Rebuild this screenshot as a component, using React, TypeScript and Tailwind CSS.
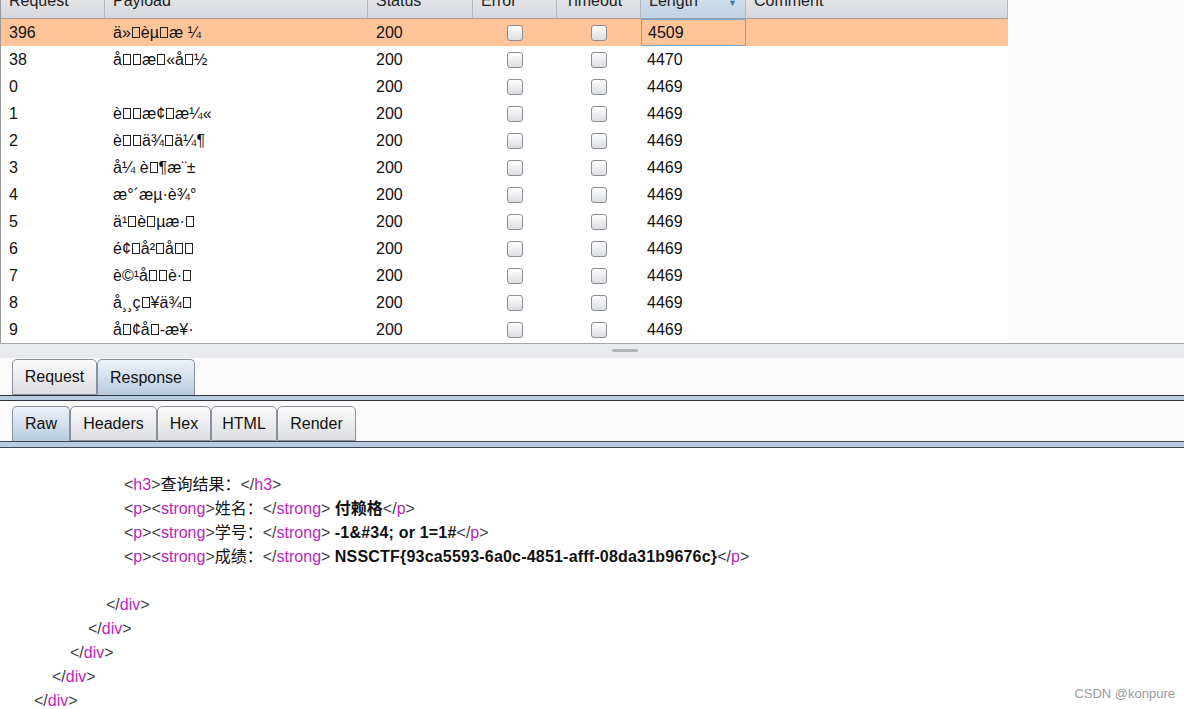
import React from "react";

type Row = {
    id: string;
    payload: string;
    length: string;
    selected?: boolean;
};

const rows: Row[] = [
    { id: "396", payload: "ä»□èµ□æ ¼", length: "4509", selected: true },
    { id: "38", payload: "å□□æ□«å□½", length: "4470" },
    { id: "0", payload: "", length: "4469" },
    { id: "1", payload: "è□□æ¢□æ¼«", length: "4469" },
    { id: "2", payload: "è□□ä¾□ä¼¶", length: "4469" },
    { id: "3", payload: "å¼ è□¶æ¨±", length: "4469" },
    { id: "4", payload: "æ°´æµ·è¾°", length: "4469" },
    { id: "5", payload: "ä¹□è□µæ·□", length: "4469" },
    { id: "6", payload: "é¢□å²□å□□", length: "4469" },
    { id: "7", payload: "è©¹å□□è·□", length: "4469" },
    { id: "8", payload: "å¸¸ç□¥ä¾□", length: "4469" },
    { id: "9", payload: "å□¢å□-æ¥·", length: "4469" },
];

// missing glyph boxes the way the Java table draws them
function Mojibake({ text }: { text: string }) {
    return (
        <span className="flex items-center">
            {text.split("").map((ch, i) =>
                ch === "□" ? (
                    <span key={i} className="inline-block w-[8px] h-[11px] border border-[#222] mx-[1px]" />
                ) : (
                    <span key={i} className="whitespace-pre">{ch}</span>
                )
            )}
        </span>
    );
}

function Checkbox() {
    return <div className="w-4 h-4 rounded-[3px] border border-[#8a8d93] bg-gradient-to-b from-white to-[#dcdde0]" />;
}

function HeaderCell({ label, width, active }: { label: string; width: string; active?: boolean }) {
    return (
        <div
            className={`${width} relative flex items-center pl-2 border-r border-[#b3b6bd] ${
                active ? "bg-gradient-to-b from-[#dfe8f2] to-[#bfd1e3]" : ""
            }`}
        >
            {label}
            {active && <span className="absolute right-[8px] top-[16px] text-[9px] leading-none text-[#4a78ad]">▼</span>}
        </div>
    );
}

function Tab({ label, width, selected }: { label: string; width: string; selected?: boolean }) {
    return (
        <div
            className={`${width} h-full flex items-center justify-center rounded-t-[5px] border border-[#8a8f99] ${
                selected
                    ? "border-b-0 bg-gradient-to-b from-[#eef3f8] to-[#b7cbdf]"
                    : "bg-gradient-to-b from-[#fbfbfc] to-[#dcdde1]"
            }`}
        >
            {label}
        </div>
    );
}

const Br = ({ children }: { children: React.ReactNode }) => <span className="text-[#3c3c3c]">{children}</span>;
const Tg = ({ children }: { children: React.ReactNode }) => <span className="text-[#c01ec0]">{children}</span>;

function Open({ tag }: { tag: string }) {
    return (
        <>
            <Br>&lt;</Br>
            <Tg>{tag}</Tg>
            <Br>&gt;</Br>
        </>
    );
}

function Close({ tag }: { tag: string }) {
    return (
        <>
            <Br>&lt;/</Br>
            <Tg>{tag}</Tg>
            <Br>&gt;</Br>
        </>
    );
}

export default function App() {
    return (
        <div className="w-[1184px] h-[709px] overflow-hidden flex flex-col bg-[#fafafa] text-[16px] text-[#111] font-['Liberation_Sans','Noto_Sans_CJK_SC',sans-serif]">
            {/* intruder results table */}
            <div className="shrink-0 w-[1008px] bg-white border-l border-[#9a9a9a]">
                <div className="h-[36px] -mt-[17px] flex border-b border-[#9ea2aa] bg-gradient-to-b from-[#eceef1] to-[#d6d8dd] text-[#222]">
                    <HeaderCell label="Request" width="w-[104px]" />
                    <HeaderCell label="Payload" width="w-[263px]" />
                    <HeaderCell label="Status" width="w-[105px]" />
                    <HeaderCell label="Error" width="w-[84px]" />
                    <HeaderCell label="Timeout" width="w-[84px]" />
                    <HeaderCell label="Length" width="w-[105px]" active />
                    <HeaderCell label="Comment" width="w-[262px]" />
                </div>
                {rows.map((r) => (
                    <div key={r.id} className={`flex h-[27px] ${r.selected ? "bg-[#ffc598]" : "bg-white"}`}>
                        <div className="w-[104px] pl-2 flex items-center">{r.id}</div>
                        <div className="w-[263px] pl-2 flex items-center">
                            <Mojibake text={r.payload} />
                        </div>
                        <div className="w-[105px] pl-2 flex items-center">200</div>
                        <div className="w-[84px] flex items-center justify-center">
                            <Checkbox />
                        </div>
                        <div className="w-[84px] flex items-center justify-center">
                            <Checkbox />
                        </div>
                        <div
                            className={`w-[105px] pl-[6px] flex items-center ${
                                r.selected ? "border border-[#7ea3cc]" : ""
                            }`}
                        >
                            {r.length}
                        </div>
                        <div className="w-[262px]" />
                    </div>
                ))}
            </div>

            {/* split pane divider */}
            <div className="shrink-0 h-[15px] border-t border-[#a3a5aa] bg-[#e9eaee] pt-[5px]">
                <div className="ml-[612px] w-[26px] h-[3px] rounded-full bg-[#b1b3b8]" />
            </div>

            {/* Request / Response tabs */}
            <div className="shrink-0 pt-[1px]">
                <div className="h-[36px] flex pl-3">
                    <Tab label="Request" width="w-[85px]" />
                    <Tab label="Response" width="w-[98px]" selected />
                </div>
                <div className="h-[6px] border-y border-[#2e323a] bg-[#b8cce1]" />
            </div>

            {/* Raw / Headers / Hex / HTML / Render */}
            <div className="shrink-0 pt-[5px]">
                <div className="h-[35px] flex pl-3">
                    <Tab label="Raw" width="w-[58px]" selected />
                    <Tab label="Headers" width="w-[87px]" />
                    <Tab label="Hex" width="w-[54px]" />
                    <Tab label="HTML" width="w-[66px]" />
                    <Tab label="Render" width="w-[79px]" />
                </div>
                <div className="h-[7px] border-y border-[#3f444f] bg-[#b8cce1]" />
            </div>

            {/* raw response body */}
            <div className="relative flex-1 min-h-0 overflow-hidden bg-white pt-[25px] leading-[24px]">
                <div className="pl-[124px]">
                    <Open tag="h3" />
                    查询结果：
                    <Close tag="h3" />
                </div>
                <div className="pl-[124px]">
                    <Open tag="p" />
                    <Open tag="strong" />
                    姓名：
                    <Close tag="strong" /> <span className="font-bold">付赖格</span>
                    <Close tag="p" />
                </div>
                <div className="pl-[124px]">
                    <Open tag="p" />
                    <Open tag="strong" />
                    学号：
                    <Close tag="strong" /> <span className="font-bold tracking-[0.2px]">-1&amp;#34; or 1=1#</span>
                    <Close tag="p" />
                </div>
                <div className="pl-[124px]">
                    <Open tag="p" />
                    <Open tag="strong" />
                    成绩：
                    <Close tag="strong" />{" "}
                    <span className="font-bold tracking-[0.2px]">NSSCTF{"{"}93ca5593-6a0c-4851-afff-08da31b9676c{"}"}</span>
                    <Close tag="p" />
                </div>
                <div className="h-[24px]" />
                <div className="pl-[106px]">
                    <Close tag="div" />
                </div>
                <div className="pl-[88px]">
                    <Close tag="div" />
                </div>
                <div className="pl-[70px]">
                    <Close tag="div" />
                </div>
                <div className="pl-[52px]">
                    <Close tag="div" />
                </div>
                <div className="pl-[34px]">
                    <Close tag="div" />
                </div>

                <div className="absolute right-[9px] bottom-[9px] text-[13px] leading-none text-[#9a9a9a]">CSDN @konpure</div>
            </div>
        </div>
    );
}
